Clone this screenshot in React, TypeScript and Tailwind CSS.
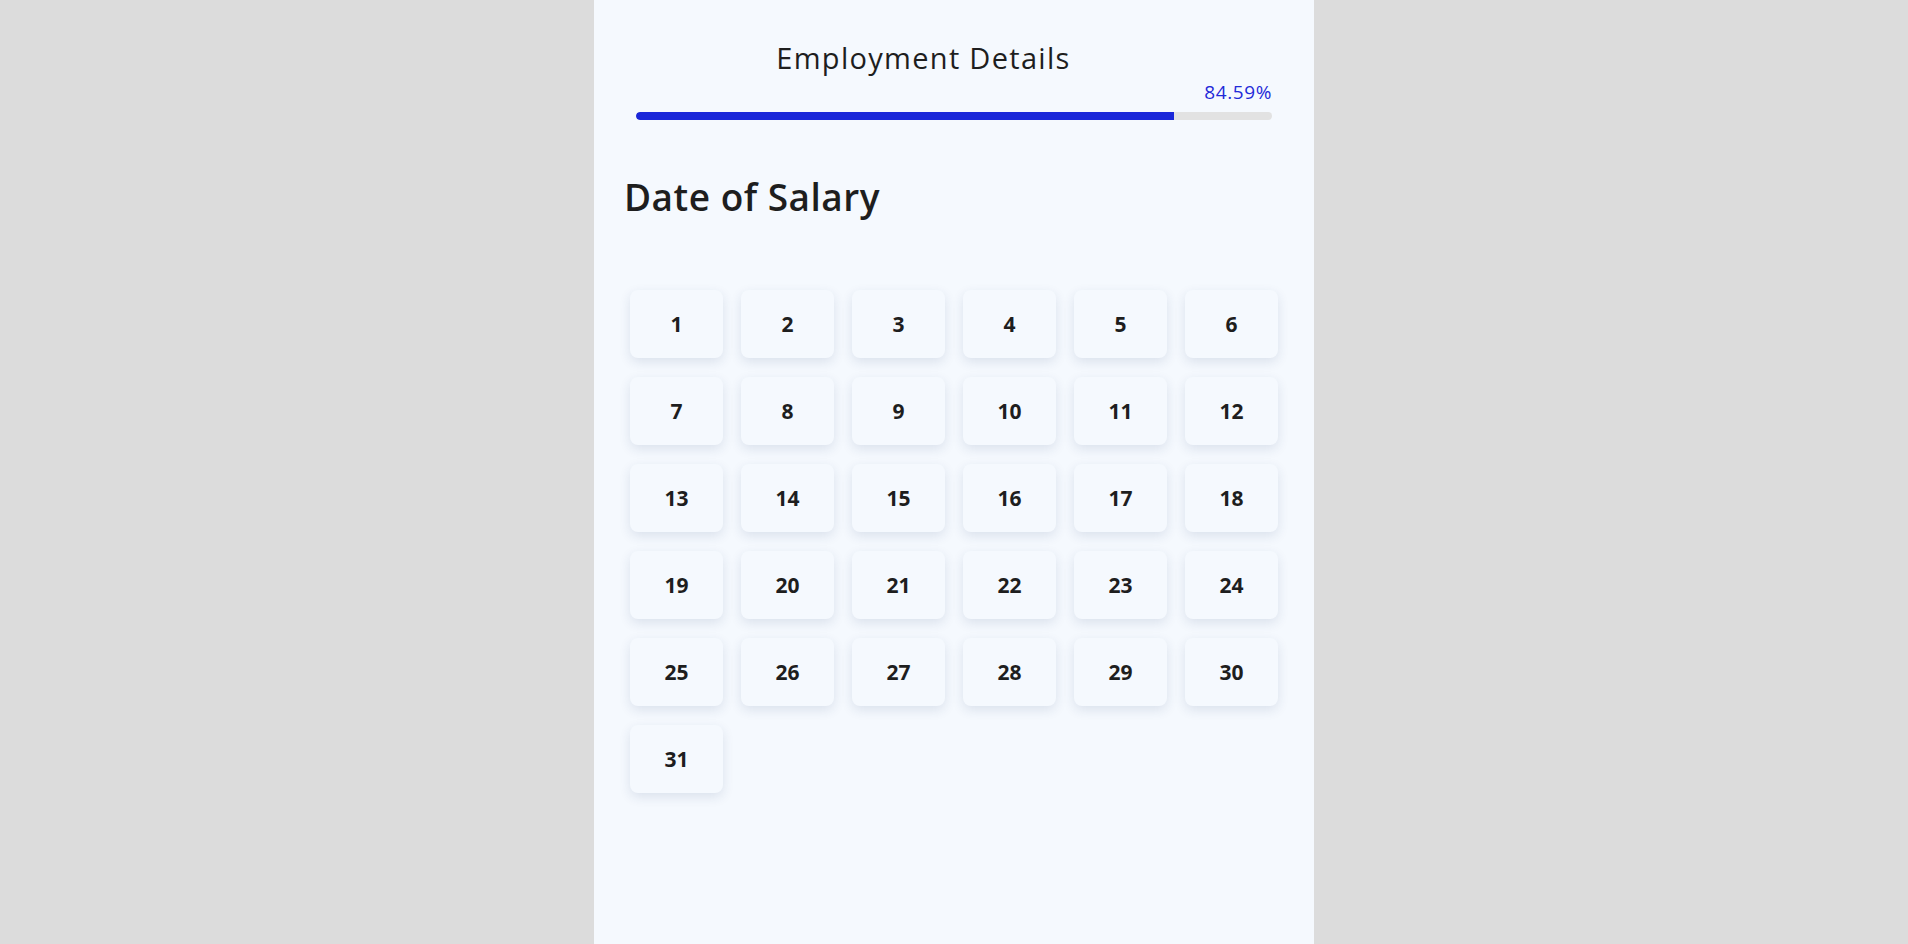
const days = Array.from({ length: 31 }, (_, i) => i + 1);

export default function App() {
  const progress = 84.59;
  return (
    <div className="min-h-screen bg-[#dcdcdc] flex justify-center font-['Open_Sans',sans-serif] text-[#1e1e1e]">
      <div className="w-[720px] min-h-[944px] bg-[#f5f9fe]">
        <div className="px-[42px] pt-[38px]">
          <h1 className="pr-[61px] text-center text-[29px] leading-[40px] tracking-[1.3px] font-normal">
            Employment Details
          </h1>
          <div className="flex justify-end mt-[1px]">
            <span className="text-[19px] leading-[26px] tracking-[0.6px] text-[#1f2ad8]">{progress}%</span>
          </div>
          <div className="mt-[7px] h-[8px] w-full rounded-full bg-[#e2e2e2] overflow-hidden">
            <div className="h-full rounded-l-full bg-[#1a27d9]" style={{ width: `${progress}%` }} />
          </div>
        </div>

        <h2 className="pl-[30px] mt-[52px] text-[37px] leading-[50px] tracking-[0.5px] font-semibold">Date of Salary</h2>

        <div className="pl-[36px] mt-[68px] grid grid-cols-[repeat(6,93px)] gap-x-[18px] gap-y-[19px]">
          {days.map((d) => (
            <button
              key={d}
              className="h-[68px] pt-[2px] rounded-[8px] bg-[#f5f9fe] shadow-[0_4px_12px_rgba(30,60,110,0.12)] text-[21px] font-bold text-[#1e1e1e]"
            >
              {d}
            </button>
          ))}
        </div>
      </div>
    </div>
  );
}
